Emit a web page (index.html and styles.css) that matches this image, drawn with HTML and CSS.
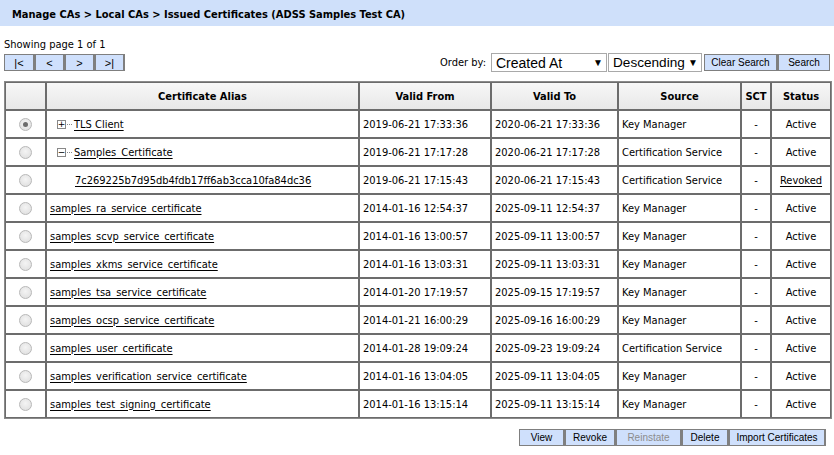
FILE: index.html
```html
<!DOCTYPE html>
<html>
<head>
<meta charset="utf-8">
<link rel="stylesheet" href="styles.css">
</head>
<body>
<div class="titlebar">Manage CAs &gt; Local CAs &gt; Issued Certificates (ADSS Samples Test CA)</div>
<div class="content">
  <div class="showing">Showing page 1 of 1</div>
  <div class="toolbar">
    <div class="pager">
      <span class="btn pbtn">|&lt;</span><span class="btn pbtn">&lt;</span><span class="btn pbtn">&gt;</span><span class="btn pbtn">&gt;|</span>
    </div>
    <div class="order">
      <span class="order-label">Order by:</span>
      <span class="sel sel-field">Created At<span class="arrow">▼</span></span>
      <span class="sel sel-dir">Descending<span class="arrow">▼</span></span>
      <span class="btn cbtn">Clear Search</span><span class="btn sbtn">Search</span>
    </div>
  </div>
  <table class="grid">
    <colgroup>
      <col class="c-radio"><col class="c-alias"><col class="c-from"><col class="c-to"><col class="c-src"><col class="c-sct"><col class="c-status">
    </colgroup>
    <thead>
      <tr><th></th><th>Certificate Alias</th><th>Valid From</th><th>Valid To</th><th>Source</th><th>SCT</th><th>Status</th></tr>
    </thead>
    <tbody>
      <tr><td class="rc"><span class="radio checked"></span></td><td class="alias"><span class="tree"><span class="box">+</span><span class="dots"></span></span><a>TLS Client</a></td><td>2019-06-21 17:33:36</td><td>2020-06-21 17:33:36</td><td>Key Manager</td><td class="ctr">-</td><td class="ctr">Active</td></tr>
      <tr><td class="rc"><span class="radio"></span></td><td class="alias"><span class="tree"><span class="box">−</span><span class="dots"></span></span><a>Samples_Certificate</a></td><td>2019-06-21 17:17:28</td><td>2020-06-21 17:17:28</td><td>Certification Service</td><td class="ctr">-</td><td class="ctr">Active</td></tr>
      <tr><td class="rc"><span class="radio"></span></td><td class="alias child"><a>7c269225b7d95db4fdb17ff6ab3cca10fa84dc36</a></td><td>2019-06-21 17:15:43</td><td>2020-06-21 17:15:43</td><td>Certification Service</td><td class="ctr">-</td><td class="ctr"><a>Revoked</a></td></tr>
      <tr><td class="rc"><span class="radio"></span></td><td class="alias"><a>samples_ra_service_certificate</a></td><td>2014-01-16 12:54:37</td><td>2025-09-11 12:54:37</td><td>Key Manager</td><td class="ctr">-</td><td class="ctr">Active</td></tr>
      <tr><td class="rc"><span class="radio"></span></td><td class="alias"><a>samples_scvp_service_certificate</a></td><td>2014-01-16 13:00:57</td><td>2025-09-11 13:00:57</td><td>Key Manager</td><td class="ctr">-</td><td class="ctr">Active</td></tr>
      <tr><td class="rc"><span class="radio"></span></td><td class="alias"><a>samples_xkms_service_certificate</a></td><td>2014-01-16 13:03:31</td><td>2025-09-11 13:03:31</td><td>Key Manager</td><td class="ctr">-</td><td class="ctr">Active</td></tr>
      <tr><td class="rc"><span class="radio"></span></td><td class="alias"><a>samples_tsa_service_certificate</a></td><td>2014-01-20 17:19:57</td><td>2025-09-15 17:19:57</td><td>Key Manager</td><td class="ctr">-</td><td class="ctr">Active</td></tr>
      <tr><td class="rc"><span class="radio"></span></td><td class="alias"><a>samples_ocsp_service_certificate</a></td><td>2014-01-21 16:00:29</td><td>2025-09-16 16:00:29</td><td>Key Manager</td><td class="ctr">-</td><td class="ctr">Active</td></tr>
      <tr><td class="rc"><span class="radio"></span></td><td class="alias"><a>samples_user_certificate</a></td><td>2014-01-28 19:09:24</td><td>2025-09-23 19:09:24</td><td>Certification Service</td><td class="ctr">-</td><td class="ctr">Active</td></tr>
      <tr><td class="rc"><span class="radio"></span></td><td class="alias"><a>samples_verification_service_certificate</a></td><td>2014-01-16 13:04:05</td><td>2025-09-11 13:04:05</td><td>Key Manager</td><td class="ctr">-</td><td class="ctr">Active</td></tr>
      <tr><td class="rc"><span class="radio"></span></td><td class="alias"><a>samples_test_signing_certificate</a></td><td>2014-01-16 13:15:14</td><td>2025-09-11 13:15:14</td><td>Key Manager</td><td class="ctr">-</td><td class="ctr">Active</td></tr>
    </tbody>
  </table>
  <div class="actions">
    <span class="btn abtn b-view">View</span><span class="btn abtn b-revoke">Revoke</span><span class="btn abtn b-reinstate disabled">Reinstate</span><span class="btn abtn b-delete">Delete</span><span class="btn abtn b-import">Import Certificates</span>
  </div>
</div>
</body>
</html>
```

FILE: styles.css
```css
html, body {
  margin: 0;
  padding: 0;
  background: #ffffff;
}
body {
  font-family: "DejaVu Sans Condensed", "DejaVu Sans", sans-serif;
  font-size: 11px;
  color: #000;
}
.titlebar {
  background: #cfe0fa;
  height: 26px;
  line-height: 29px;
  padding-left: 12px;
  font-weight: bold;
  font-size: 11px;
}
.content {
  padding: 12px 4px 0 4px;
}
.showing {
  height: 14px;
  line-height: 14px;
}
.toolbar {
  display: flex;
  justify-content: space-between;
  align-items: flex-start;
  height: 29px;
}
.btn {
  display: inline-flex;
  align-items: center;
  justify-content: center;
  box-sizing: border-box;
  height: 17px;
  background: #cfe0fc;
  border: 1px solid #7f7f7f;
  font-family: "Liberation Sans", Arial, sans-serif;
  font-size: 10px;
  color: #000;
  padding: 0;
}
.pager {
  display: flex;
  padding-top: 2px;
}
.pbtn {
  width: 30px;
  border-width: 1px 2px 1px 1px;
  font-size: 11px;
}
.pbtn:first-child { width: 31px; border-left-width: 1px; }
.order {
  display: flex;
  align-items: center;
  padding-top: 1px;
}
.order-label {
  margin-right: 5px;
  font-size: 11px;
}
.sel {
  display: inline-flex;
  align-items: center;
  justify-content: space-between;
  box-sizing: border-box;
  height: 19px;
  border: 1px solid #a9a9a9;
  background: #fff;
  font-family: "Liberation Sans", Arial, sans-serif;
  font-size: 14px;
  padding: 0 3px 0 4px;
  margin-right: 1px;
}
.sel-field { width: 116px; }
.sel-dir { width: 94px; margin-right: 2px; font-size: 13.6px; }
.arrow {
  font-size: 10px;
  line-height: 1;
}
.cbtn { width: 74px; border-width: 1px 2px 1px 1px; }
.sbtn { width: 52px; }
.grid {
  width: 826px;
  table-layout: fixed;
  border-collapse: separate;
  border-spacing: 0;
  border: 1px solid #8a8a8a;
}
.c-radio { width: 41px; }
.c-alias { width: 313px; }
.c-from { width: 132px; }
.c-to { width: 127px; }
.c-src { width: 123px; }
.c-sct { width: 30px; }
.c-status { width: 60px; }
.grid th, .grid td {
  border: 1px solid #6c6c6c;
  height: 28px;
  padding: 0 0 0 3px;
  white-space: nowrap;
  overflow: hidden;
  box-sizing: border-box;
}
.grid th {
  background: linear-gradient(#f7f7f7, #e8e8e8);
  font-weight: bold;
  text-align: center;
  padding: 0;
}
.grid td.ctr { text-align: center; padding: 0; }
.grid td.rc { text-align: center; padding: 0; }
.radio {
  display: inline-block;
  width: 11px;
  height: 11px;
  border-radius: 50%;
  border: 1px solid #b8b8b8;
  background: radial-gradient(circle at 50% 40%, #f4f4f4, #dcdcdc);
  vertical-align: middle;
  position: relative;
}
.radio.checked::after {
  content: "";
  position: absolute;
  left: 3px;
  top: 3px;
  width: 5px;
  height: 5px;
  border-radius: 50%;
  background: #6b6b6b;
}
a {
  color: #000;
  text-decoration: underline;
  text-underline-offset: 2px;
}
.grid td.alias { padding-left: 3px; }
.grid td.alias.child { padding-left: 28px; }
.tree {
  display: inline-flex;
  align-items: center;
  margin-left: 7px;
  margin-right: 2px;
  vertical-align: middle;
}
.box {
  display: inline-flex;
  align-items: center;
  justify-content: center;
  box-sizing: border-box;
  width: 9px;
  height: 9px;
  border: 1px solid #888;
  font-family: "DejaVu Sans", sans-serif;
  font-size: 9px;
  line-height: 7px;
  color: #000;
}
.dots {
  display: inline-block;
  width: 5px;
  margin-left: 1px;
  border-top: 1px dotted #888;
}
.actions {
  display: flex;
  justify-content: flex-end;
  padding-top: 10px;
  padding-right: 4px;
}
.abtn { height: 17px; border-width: 1px 2px 1px 1px; }
.b-view { width: 46px; }
.b-revoke { width: 51px; }
.b-reinstate { width: 66px; }
.b-delete { width: 47px; }
.b-import { width: 97px; }
.abtn.disabled { color: #8c8c8c; }
```
